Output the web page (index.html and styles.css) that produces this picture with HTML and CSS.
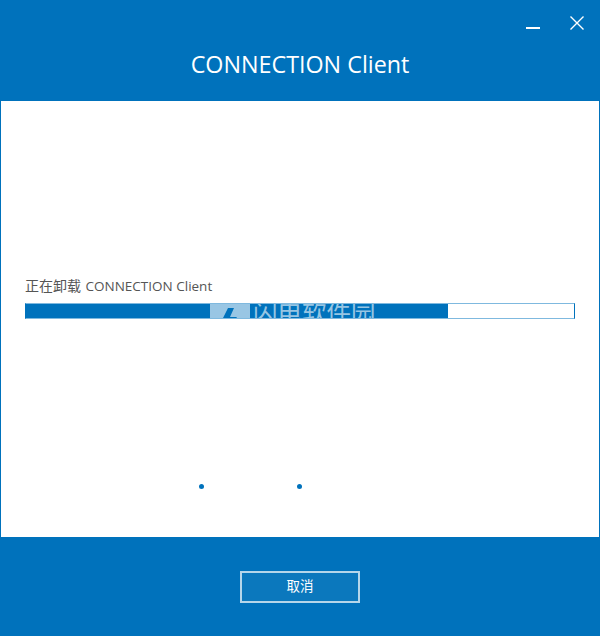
FILE: index.html
```html
<!DOCTYPE html>
<html lang="zh-CN">
<head>
    <meta charset="UTF-8">
    <title>CONNECTION Client</title>
    <link rel="stylesheet" href="styles.css">
</head>
<body>
    <div class="window">
        <header class="header">
            <div class="controls">
                <svg class="icon" width="16" height="16" viewBox="0 0 16 16"><path d="M1 13h14" stroke="#fff" stroke-width="2" fill="none"/></svg>
                <svg class="icon" width="16" height="16" viewBox="0 0 16 16"><path d="M1.5 1.5l13 13M14.5 1.5l-13 13" stroke="#fff" stroke-width="1.4" fill="none"/></svg>
            </div>
            <h1 class="title">CONNECTION Client</h1>
        </header>

        <main class="content">
            <div class="status"><span class="status-cn">正在卸载</span> CONNECTION Client</div>
            <div class="progress">
                <div class="progress-fill"></div>
                <div class="watermark">
                    <span class="wm-logo">
                        <svg width="40" height="15" viewBox="0 0 40 15"><path d="M18 3h6l-4 9h7l-2 3h-13z" fill="#0072bc"/></svg>
                    </span>
                    <span class="wm-text">闪电软件园</span>
                </div>
            </div>
            <div class="dots">
                <span class="dot"></span>
                <span class="dot"></span>
            </div>
        </main>

        <footer class="footer">
            <button class="cancel">取消</button>
        </footer>
    </div>
</body>
</html>
```

FILE: styles.css
```css
* {
    box-sizing: border-box;
}
html, body {
    margin: 0;
    padding: 0;
}
body {
    font-family: "Open Sans", "Noto Sans CJK SC", sans-serif;
    background-color: #0072bc;
}
.window {
    width: 600px;
    height: 636px;
    display: flex;
    flex-direction: column;
}
.header {
    height: 101px;
    background-color: #0072bc;
    color: #fff;
    padding: 15px 15px 0;
}
.controls {
    display: flex;
    justify-content: flex-end;
    gap: 28px;
}
.title {
    margin: 13px 0 0;
    font-size: 23.3px;
    font-weight: 400;
    line-height: 40px;
    text-align: center;
}
.content {
    height: 436px;
    background-color: #fff;
    border-left: 1px solid #0072bc;
    border-right: 1px solid #0072bc;
    padding: 175px 24px 0;
}
.status {
    font-size: 13.5px;
    line-height: 20px;
    color: #555;
}
.status-cn {
    font-size: 14px;
    margin-right: 1px;
}
.progress {
    position: relative;
    height: 16px;
    margin-top: 7px;
    border: 1px solid #0072bc;
    border-top-color: #7fb9df;
    border-bottom-color: #7fb9df;
    overflow: hidden;
}
.progress-fill {
    width: 422px;
    height: 100%;
    background-color: #0072bc;
}
.watermark {
    position: absolute;
    left: 184px;
    top: -1px;
    display: flex;
    height: 16px;
    overflow: hidden;
}
.wm-logo {
    width: 40px;
    height: 16px;
    background-color: rgba(255, 255, 255, 0.6);
}
.wm-text {
    width: 124px;
    margin-left: 3px;
    font-size: 24.5px;
    line-height: 20px;
    color: rgba(255, 255, 255, 0.6);
    white-space: nowrap;
}
.dots {
    display: flex;
    justify-content: flex-start;
    gap: 93px;
    margin: 165px 0 0 173.5px;
}
.dot {
    width: 5px;
    height: 5px;
    border-radius: 50%;
    background-color: #0072bc;
}
.footer {
    flex: 1;
    display: flex;
    justify-content: center;
    padding-top: 34px;
    background-color: #0072bc;
}
.cancel {
    width: 120px;
    height: 32px;
    padding: 0 0 5px;
    background-color: #0b78bd;
    border: 2px solid #b5d6ea;
    color: #fff;
    font-family: "Open Sans", "Noto Sans CJK SC", sans-serif;
    font-size: 13.5px;
}
```
